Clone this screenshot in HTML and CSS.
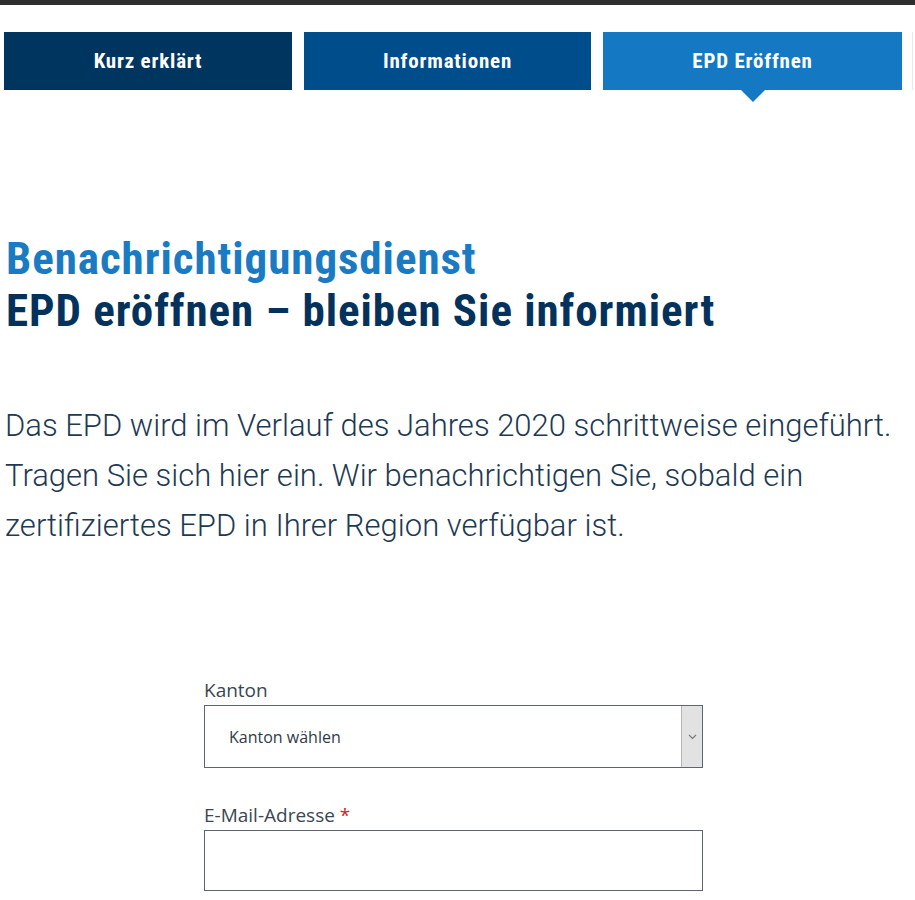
FILE: index.html
```html
<!DOCTYPE html>
<html lang="de">
<head>
    <meta charset="UTF-8">
    <meta name="viewport" content="width=device-width, initial-scale=1.0">
    <title>EPD Eröffnen</title>
    <link rel="stylesheet" href="styles.css">
</head>
<body>
    <div class="topbar"></div>

    <nav class="tabs">
        <a class="tab tab-dark" href="#">Kurz erklärt</a>
        <a class="tab tab-mid" href="#">Informationen</a>
        <a class="tab tab-light active" href="#">EPD Eröffnen</a>
        <span class="tab-edge"></span>
    </nav>

    <main>
        <h1 class="title">
            <span class="title-top">Benachrichtigungsdienst</span>
            <span class="title-bottom">EPD eröffnen – bleiben Sie informiert</span>
        </h1>

        <p class="intro">Das EPD wird im Verlauf des Jahres 2020 schrittweise eingeführt. Tragen Sie sich hier ein. Wir benachrichtigen Sie, sobald ein zertifiziertes EPD in Ihrer Region verfügbar ist.</p>

        <form class="signup">
            <div class="field">
                <label for="kanton">Kanton</label>
                <div class="select-wrap">
                    <select id="kanton">
                        <option>Kanton wählen</option>
                    </select>
                    <span class="select-arrow">
                        <svg width="9" height="6" viewBox="0 0 9 6"><path d="M1 1l3.5 3.5L8 1" fill="none" stroke="#777" stroke-width="1.1"/></svg>
                    </span>
                </div>
            </div>
            <div class="field">
                <label for="email">E-Mail-Adresse <span class="required">*</span></label>
                <input id="email" type="email">
            </div>
        </form>
    </main>
</body>
</html>
```

FILE: styles.css
```css
:root {
    --dark-blue: #00355f;
    --mid-blue: #004d8c;
    --light-blue: #1478c2;
    --text-color: #1e3954;
    --border: #5c6670;
    --condensed: "Roboto Condensed", "Open Sans", sans-serif;
}

* {
    margin: 0;
    padding: 0;
    box-sizing: border-box;
}

body {
    font-family: "Open Sans", "Liberation Sans", sans-serif;
    background: #fff;
    color: var(--text-color);
    overflow: hidden;
}

.topbar {
    height: 5px;
    background: #2e2e2e;
}

.tabs {
    display: flex;
    gap: 12px;
    margin-top: 27px;
    padding-left: 4px;
}

.tab {
    position: relative;
    display: flex;
    align-items: center;
    justify-content: center;
    height: 58px;
    color: #fff;
    font-family: var(--condensed);
    font-weight: 700;
    font-size: 21px;
    letter-spacing: 0.8px;
    text-decoration: none;
}

.tab-dark {
    width: 288px;
    background: var(--dark-blue);
}

.tab-mid {
    width: 287px;
    background: var(--mid-blue);
}

.tab-light {
    width: 299px;
    background: var(--light-blue);
}

.tab.active::after {
    content: "";
    position: absolute;
    left: 50%;
    bottom: -12px;
    margin-left: -12px;
    border-left: 12px solid transparent;
    border-right: 12px solid transparent;
    border-top: 12px solid var(--light-blue);
}

.tab-edge {
    width: 1px;
    height: 58px;
    margin-left: -2px;
    background: #e4e8ec;
}

main {
    padding: 0 6px;
}

.title {
    margin-top: 143px;
    font-family: var(--condensed);
    font-size: 45px;
    line-height: 52px;
    font-weight: 700;
    letter-spacing: 0.95px;
}

.title span {
    display: block;
}

.title-top {
    color: #1a7bc2;
}

.title-bottom {
    color: #03325c;
}

.intro {
    margin-top: 64px;
    margin-left: -1px;
    width: 905px;
    font-family: Roboto, "Open Sans", sans-serif;
    font-size: 31px;
    line-height: 50px;
    font-weight: 300;
}

.signup {
    width: 499px;
    margin: 127px 0 0 198px;
}

.field {
    margin-bottom: 35px;
}

.field label {
    display: block;
    font-size: 19px;
    line-height: 24px;
    color: #3a4652;
    margin-bottom: 3px;
}

.required {
    color: #d0202a;
}

.select-wrap {
    position: relative;
}

.select-wrap select {
    display: block;
    width: 100%;
    height: 63px;
    border: 1px solid var(--border);
    background: #fff;
    padding: 0 24px;
    font-family: inherit;
    font-size: 16px;
    color: #2f3b47;
    appearance: none;
    border-radius: 0;
}

.select-arrow {
    position: absolute;
    top: 1px;
    right: 1px;
    bottom: 1px;
    width: 21px;
    display: flex;
    align-items: center;
    justify-content: center;
    background: #e2e2e2;
    border-left: 1px solid #b5b5b5;
    pointer-events: none;
}

.field input {
    display: block;
    width: 100%;
    height: 61px;
    border: 1px solid var(--border);
    border-radius: 0;
    font-family: inherit;
    font-size: 16px;
}
```
